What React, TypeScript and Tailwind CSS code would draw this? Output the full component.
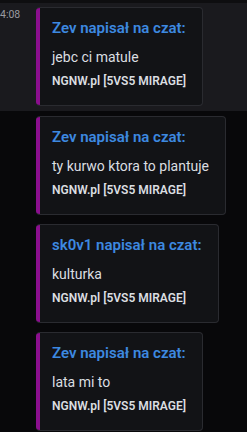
import React from "react"

type Msg = {
  author: string
  text: string
}

const messages: Msg[] = [
  { author: "Zev", text: "jebc ci matule" },
  { author: "Zev", text: "ty kurwo ktora to plantuje" },
  { author: "sk0v1", text: "kulturka" },
  { author: "Zev", text: "lata mi to" },
]

function Embed({ msg }: { msg: Msg }) {
  return (
    <div className="inline-flex rounded-[4px] border border-l-0 border-[#2a2b30] bg-[#121316] overflow-hidden h-[99px]">
      {/* purple accent bar */}
      <div className="w-[4px] shrink-0 bg-[#8b0f8e]" />
      <div className="flex flex-col pl-[12px] pr-[16px] pt-[10px]">
        <div className="text-[15px] leading-[20px] font-semibold text-[#3d89e0] whitespace-nowrap">
          {msg.author} napisał na czat:
        </div>
        <div className="mt-[10px] text-[14px] leading-[18px] text-[#dbdee1] whitespace-nowrap">
          {msg.text}
        </div>
        <div className="mt-[7px] text-[12px] leading-[16px] font-semibold text-[#dbdee1] whitespace-nowrap">
          NGNW.pl [5VS5 MIRAGE]
        </div>
      </div>
    </div>
  )
}

export default function App() {
  return (
    <div
      className="w-[247px] h-[432px] overflow-hidden bg-[#08080a] flex flex-col"
      style={{ fontFamily: 'Roboto, "Noto Sans", sans-serif' }}
    >
      <div className="h-[3px] bg-[#0e0e10] shrink-0" />

      {/* hovered message */}
      <div className="flex bg-[#1a1a1e] pt-[4px] pb-[5px] shrink-0">
        <div className="w-[36px] shrink-0 pt-[1px] text-[10.5px] leading-[14px] text-[#9a9ba1]">
          4:08
        </div>
        <Embed msg={messages[0]} />
      </div>

      <div className="flex flex-col gap-[9px] pt-[5px] pl-[36px]">
        {messages.slice(1).map((m, i) => (
          <div key={i} className="flex">
            <Embed msg={m} />
          </div>
        ))}
      </div>
    </div>
  )
}
